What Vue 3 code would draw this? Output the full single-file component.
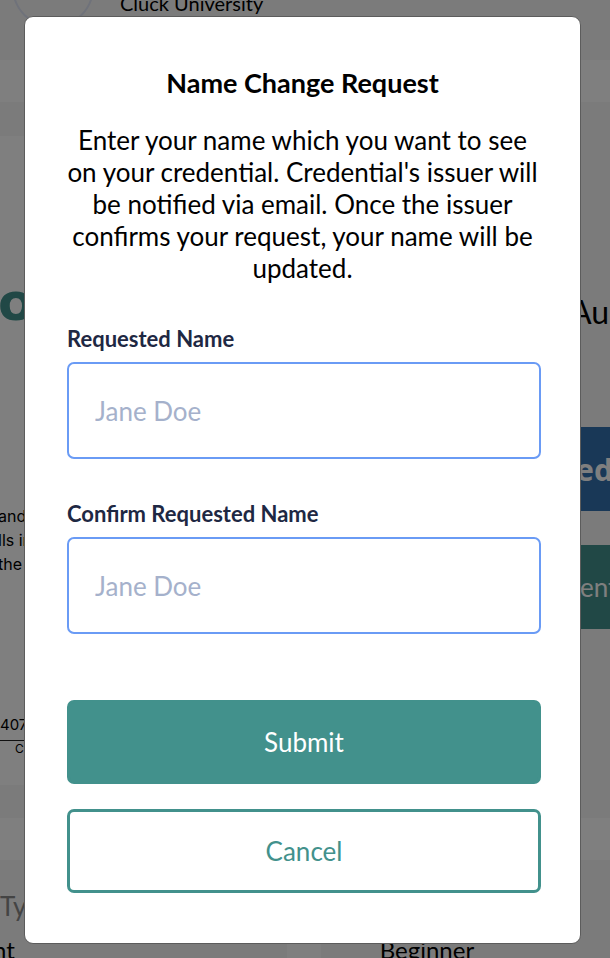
<script setup>
import { ref } from 'vue'

const requestedName = ref('')
const confirmedName = ref('')
</script>

<template>
  <div class="page">
    <div class="background" inert>
      <section class="panel issuer">
        <span class="avatar"></span>
        <p class="issuer-name">Cluck University</p>
      </section>
      <section class="panel credential">
        <div class="certificate">
          <p class="recipient">o</p>
          <p class="description">and<br />lls in<br />the</p>
          <p class="serial">407</p>
          <p class="caption">C</p>
        </div>
        <div class="side">
          <p class="date">Au</p>
          <button class="side-button linked" type="button">ed</button>
          <button class="side-button" type="button">ent</button>
        </div>
      </section>
      <div class="facts">
        <section class="panel fact">
          <h2>Type</h2>
          <p>nt</p>
        </section>
        <section class="panel fact level">
          <p>Beginner</p>
        </section>
      </div>
    </div>
    <div class="overlay">
      <div class="dialog" role="dialog" aria-modal="true" aria-labelledby="dialog-title">
        <header>
          <h1 id="dialog-title">Name Change Request</h1>
          <p>
            Enter your name which you want to see on your credential. Credential's issuer will be
            notified via email. Once the issuer confirms your request, your name will be updated.
          </p>
        </header>
        <form @submit.prevent>
          <div class="field">
            <label for="requested">Requested Name</label>
            <input id="requested" v-model="requestedName" type="text" placeholder="Jane Doe" />
          </div>
          <div class="field">
            <label for="confirmed">Confirm Requested Name</label>
            <input id="confirmed" v-model="confirmedName" type="text" placeholder="Jane Doe" />
          </div>
          <div class="actions">
            <button class="submit" type="submit">Submit</button>
            <button class="cancel" type="button">Cancel</button>
          </div>
        </form>
      </div>
    </div>
  </div>
</template>

<style>
body {
  margin: 0;
}
</style>

<style scoped>
* {
  box-sizing: border-box;
}

h1,
h2,
p {
  margin: 0;
}

.page {
  position: relative;
  min-height: 100vh;
  overflow: hidden;
  font-family: Lato, 'Liberation Sans', sans-serif;
  color: #000;
}

.background {
  display: flex;
  flex-direction: column;
  gap: 42px;
  height: 100vh;
}

.panel {
  flex: none;
  background: #f7f7f7;
}

.issuer {
  display: flex;
  gap: 26px;
  height: 60px;
  padding-left: 12px;
}

.avatar {
  width: 82px;
  height: 82px;
  margin-top: -54px;
  border: 2px solid #dfe4f5;
  border-radius: 50%;
}

.issuer-name {
  margin-top: -9px;
  font-size: 20px;
  line-height: 24px;
}

.credential {
  display: flex;
  justify-content: space-between;
  height: 716px;
  padding: 34px 0 33px;
}

.certificate {
  width: 300px;
  background: #fff;
  font-family: Inter, sans-serif;
}

.recipient {
  margin: 136px 0 0 -2px;
  color: #42918c;
  font-family: 'DejaVu Sans', sans-serif;
  font-size: 52px;
  font-weight: 700;
  line-height: 60px;
}

.description {
  margin: 172px 0 0 -2px;
  font-size: 16px;
  line-height: 24px;
}

.serial {
  margin-top: 139px;
  padding-bottom: 5px;
  border-bottom: 1px solid #222;
  font-size: 15px;
  line-height: 20px;
}

.caption {
  padding-left: 15px;
  font-size: 12px;
  line-height: 16px;
}

.side {
  display: flex;
  flex-direction: column;
  width: 40px;
}

.date {
  margin: 156px 0 95px;
  font-size: 32px;
  line-height: 40px;
}

.side-button {
  flex: none;
  height: 84px;
  margin-bottom: 34px;
  padding: 0 10px;
  border: 0;
  background: #42918c;
  color: #fff;
  font: 26px Lato, sans-serif;
  text-align: left;
}

.linked {
  padding: 0 6px;
  background: #3370ae;
  font: 700 30px 'Noto Sans', sans-serif;
}

.facts {
  display: flex;
  flex: none;
  gap: 34px;
}

.fact {
  width: 47%;
  height: 140px;
  padding-top: 30px;
  font-size: 24px;
  line-height: 28px;
}

.fact h2 {
  margin-bottom: 14px;
  color: #888;
  font-size: 26px;
  font-weight: 400;
  line-height: 32px;
}

.fact p {
  margin-left: -7px;
}

.level {
  flex: 1;
  padding: 76px 0 0 66px;
}

.overlay {
  position: absolute;
  inset: 0;
  padding: 16px 29px 0 24px;
  background: rgba(0, 0, 0, 0.5);
}

.dialog {
  padding: 48px 0 50px;
  border: 1px solid #5c5c5c;
  border-radius: 9px;
  background: #fff;
}

header {
  padding: 0 40px;
  text-align: center;
}

h1 {
  margin-bottom: 23px;
  font-size: 27px;
  font-weight: 700;
  line-height: 36px;
}

header p {
  font-size: 26px;
  line-height: 32px;
}

form {
  padding: 42px 39px 0 42px;
}

.field {
  display: flex;
  flex-direction: column;
  gap: 11px;
  margin-bottom: 42px;
}

label {
  color: #1e2843;
  font-size: 22px;
  font-weight: 700;
  line-height: 25px;
}

input {
  width: 100%;
  height: 97px;
  padding: 0 26px;
  border: 2px solid #6a9bf5;
  border-radius: 7px;
  background: #fff;
  color: #1e2843;
  font: 26px Lato, sans-serif;
}

input::placeholder {
  color: #a5b1cb;
  opacity: 1;
}

.actions {
  display: flex;
  flex-direction: column;
  gap: 25px;
  padding-top: 24px;
}

.actions button {
  height: 84px;
  border: 3px solid #42918c;
  border-radius: 7px;
  font: 26px Lato, sans-serif;
}

.submit {
  background: #42918c;
  color: #fff;
}

.cancel {
  background: #fff;
  color: #42918c;
}
</style>
